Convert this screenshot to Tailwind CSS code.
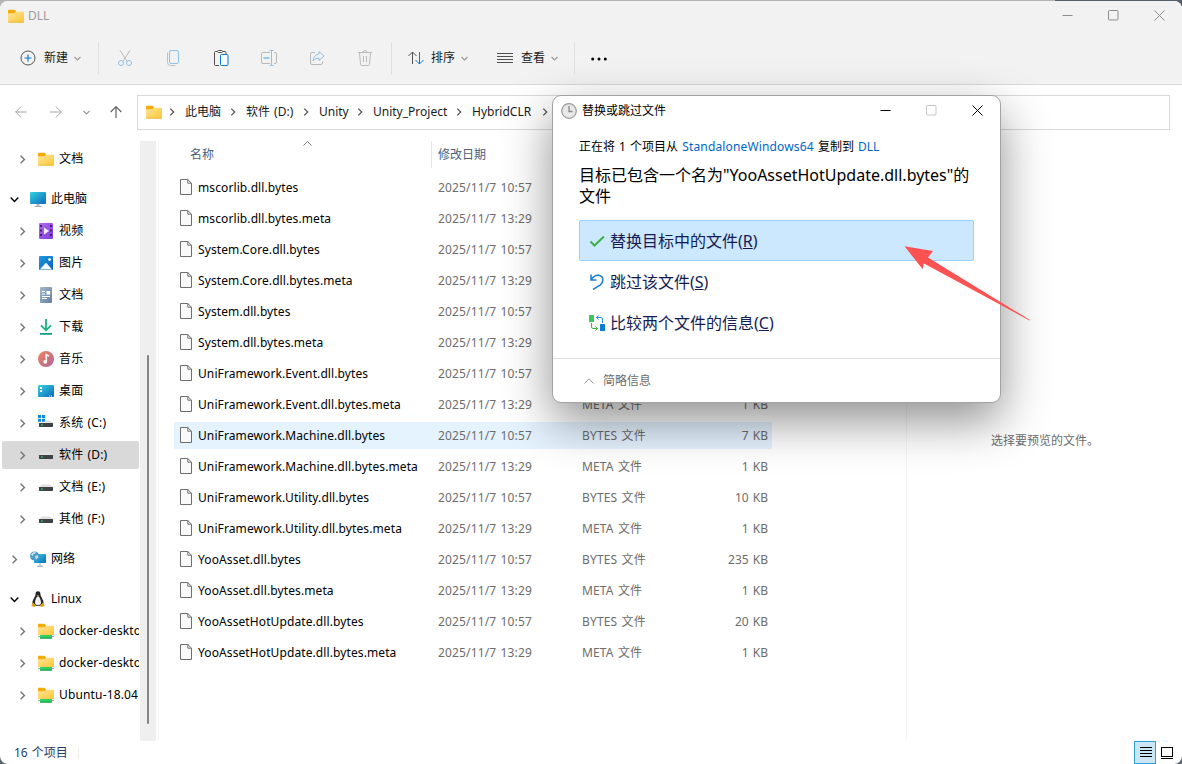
<!DOCTYPE html>
<html lang="zh-CN">
  <head>
    <meta charset="UTF-8" />
    <meta name="viewport" content="width=device-width, initial-scale=1.0" />
    <title>DLL</title>
    <script src="https://cdn.jsdelivr.net/npm/@tailwindcss/browser@4"></script>
  </head>
  <body
    class="relative w-[1182px] h-[764px] overflow-hidden bg-[#5b6670] font-['Noto_Sans','Noto_Sans_CJK_SC',sans-serif] text-[12px] leading-4 text-black [word-spacing:1px]"
  >
    <!-- shared icons -->
    <svg class="absolute size-0">
      <defs>
        <linearGradient id="g-folder" x1="0" y1="0" x2="1" y2="1">
          <stop offset="0" stop-color="#ffe599" />
          <stop offset="1" stop-color="#fcc736" />
        </linearGradient>
        <linearGradient id="g-screen" x1="0" y1="0" x2="1" y2="1">
          <stop offset="0" stop-color="#35d3e0" />
          <stop offset="1" stop-color="#0d68bd" />
        </linearGradient>
        <linearGradient id="g-video" x1="0" y1="0" x2="1" y2="1">
          <stop offset="0" stop-color="#b568f0" />
          <stop offset="1" stop-color="#7c3bd8" />
        </linearGradient>
        <linearGradient id="g-pic" x1="0" y1="0" x2="1" y2="1">
          <stop offset="0" stop-color="#1d9be6" />
          <stop offset="1" stop-color="#0b5fb8" />
        </linearGradient>
        <linearGradient id="g-doc" x1="0" y1="0" x2="1" y2="1">
          <stop offset="0" stop-color="#a3b8cf" />
          <stop offset="1" stop-color="#64809f" />
        </linearGradient>
        <linearGradient id="g-music" x1="0" y1="0" x2="1" y2="1">
          <stop offset="0" stop-color="#f0875a" />
          <stop offset="1" stop-color="#b0609f" />
        </linearGradient>
        <symbol id="folder" viewBox="0 0 16 16">
          <path d="M0 2.7q0-1 1-1h5.2q.6 0 1 .6l.9 1.2V6H0z" fill="#f4ab0d" />
          <path d="M0 5.3h6.3l1.4-1.6h7.5q.8 0 .8.8v9.2q0 .8-.8.8H.8q-.8 0-.8-.8z" fill="url(#g-folder)" />
          <path d="M.3 14.2h15.4" stroke="#e9a91b" stroke-width=".7" />
        </symbol>
        <symbol id="netfolder" viewBox="0 0 16 16">
          <path d="M0 1.8q0-1 1-1h5.2q.6 0 1 .6l.9 1.2V5H0z" fill="#f4ab0d" />
          <path d="M0 4.3h6.3l1.4-1.6h7.5q.8 0 .8.8v8.5H0z" fill="url(#g-folder)" />
          <path d="M0 13.5h16" stroke="#9aa5ad" stroke-width="1" />
          <rect x="2" y="12" width="12" height="3.6" rx=".6" fill="#2fcf62" />
          <path d="M2.2 15.2h11.6" stroke="#178f43" stroke-width=".9" />
        </symbol>
        <symbol id="pc" viewBox="0 0 16 16">
          <rect x="0" y="1" width="16" height="12" rx="1" fill="url(#g-screen)" />
          <path d="M8 13v2" stroke="#b9c0c6" stroke-width="3" />
          <path d="M4.5 15.4h7" stroke="#98a3ad" stroke-width="1" />
        </symbol>
        <symbol id="video" viewBox="0 0 16 16">
          <rect x="1" y="0" width="14" height="16" rx="1.2" fill="url(#g-video)" />
          <path d="M2 3h2M2 7.5h2M2 12h2M12 3h2M12 7.5h2M12 12h2" stroke="#42207e" stroke-width="1.8" />
          <path d="M6 4.4v7l5.2-3.5z" fill="#f3eaff" />
        </symbol>
        <symbol id="picture" viewBox="0 0 16 16">
          <rect x="1" y="1" width="14" height="14" rx="1" fill="url(#g-pic)" />
          <path d="M1.8 14.4l5.4-6q.8-.8 1.6 0l5.4 6z" fill="#f2f8fd" />
          <circle cx="11.6" cy="4.6" r="1.4" fill="#fff" />
        </symbol>
        <symbol id="document" viewBox="0 0 16 16">
          <rect x="2" y="0" width="12" height="16" rx="1" fill="url(#g-doc)" />
          <path d="M4 4.5h3M4 7h3M4 9.5h8M4 11.5h5" stroke="#fff" />
          <rect x="8.5" y="4" width="3.6" height="3.6" fill="#fff" />
        </symbol>
        <symbol id="download" viewBox="0 0 16 16">
          <path d="M8 0v11M3 6.3l5 5 5-5" fill="none" stroke="#19b283" stroke-width="1.8" />
          <path d="M2 14.9h12" stroke="#0f9d8e" stroke-width="1.8" />
        </symbol>
        <symbol id="music" viewBox="0 0 16 16">
          <circle cx="8" cy="8" r="8" fill="url(#g-music)" />
          <path d="M8.3 10.7V3.6l2.6 1.6" fill="none" stroke="#fff" stroke-width="1.5" />
          <circle cx="7.2" cy="10.8" r="1.9" fill="#fff" />
        </symbol>
        <symbol id="desktop" viewBox="0 0 16 16">
          <rect x="0" y="2" width="16" height="12" rx="1" fill="url(#g-screen)" />
          <path d="M2 5h2M2 8h2" stroke="#fff" stroke-width="2" />
          <path d="M11 13h1M13 13h1" stroke="#fff" />
        </symbol>
        <symbol id="drive" viewBox="0 0 16 16">
          <path d="M3.5 5.5h9l2.4 3H1z" fill="#dfe1e3" />
          <rect x="1" y="8" width="14" height="4" rx=".4" fill="#3f4347" />
          <path d="M3 10h2" stroke="#35e04a" stroke-width="1.2" />
        </symbol>
        <symbol id="windrive" viewBox="0 0 16 16">
          <path d="M0 0h3.2v3H0zM4 0h3.2v3H4zM0 3.8h3.2v3H0zM4 3.8h3.2v3H4z" fill="#1389dc" />
          <path d="M8 5.5h4.5l2.4 3H1L2 7.4h6z" fill="#dfe1e3" />
          <rect x="1" y="8" width="14" height="4" rx=".4" fill="#3f4347" />
          <path d="M3 10h2" stroke="#35e04a" stroke-width="1.2" />
        </symbol>
        <symbol id="network" viewBox="0 0 16 16">
          <rect x="4" y="3" width="12" height="9" rx=".8" fill="url(#g-screen)" />
          <path d="M10 12v3M7 15.3h6" stroke="#9ba7b1" />
          <circle cx="4.6" cy="5" r="4.6" fill="#4b9cc9" />
          <path d="M1 3.4q2-3 5-2.6l-1 2-2 .6-.4 2zM5 5l2.6-.8.8 2L6 8.4z" fill="#c9e5f2" />
        </symbol>
        <symbol id="tux" viewBox="0 0 16 16">
          <path d="M8 .2c2 0 2.5 1.6 2.5 3.2 0 2.3 3.1 5 3.1 8.6 0 2-2 3-5.6 3s-5.6-1-5.6-3c0-3.6 3.1-6.3 3.1-8.6C5.5 1.8 6 .2 8 .2z" fill="#23252a" />
          <path d="M8 5.3c1.200 0 3 3.7 3 6.2 0 1.9-1.3 2.7-3 2.7s-3-.8-3-2.7c0-2.5 1.8-6.2 3-6.2z" fill="#f2f2f2" />
          <path d="M6.6 4.2h2.8L8 5.6z" fill="#e9a51d" />
          <path d="M2.6 11.3l3.6 3.3q-.4 1.3-1.8 1.3l-3-.8zM13.4 11.3l-3.6 3.3q.4 1.3 1.8 1.3l3-.8z" fill="#d9a021" />
        </symbol>
        <symbol id="file" viewBox="0 0 12 16">
          <path d="M.5.5h7.3l3.7 3.7v11.3H.5z" fill="#fafafa" stroke="#6e6e6e" />
          <path d="M7.8.5v3.700h3.700" fill="none" stroke="#6e6e6e" />
        </symbol>
        <symbol id="right" viewBox="0 0 8 8">
          <path d="M2.3.6L5.7 4 2.3 7.4" fill="none" stroke="currentColor" stroke-width="1.3" />
        </symbol>
        <symbol id="down" viewBox="0 0 8 8">
          <path d="M.6 2.3L4 5.7l3.4-3.4" fill="none" stroke="currentColor" stroke-width="1.3" />
        </symbol>
      </defs>
    </svg>

    <!-- strip of the window behind -->
    <div class="absolute inset-x-0 top-0 h-3 flex">
      <div class="w-[1055px] bg-[#b4b4b4]"></div>
      <div class="flex-1 bg-[#55606b]"></div>
    </div>

    <div class="relative mt-px h-[763px] flex flex-col rounded-lg bg-white overflow-hidden">
      <!-- title bar and toolbar -->
      <header class="h-[84px] shrink-0 bg-[#f2f2f2] border-b border-[#dadada]">
        <div class="h-[29px] flex items-center pl-2 text-[#9a9a9a]">
          <svg class="size-4"><use href="#folder" /></svg>
          <span class="ml-1">DLL</span>
          <div class="ml-auto mr-[17px] flex items-center gap-[35px] text-[#8d8d8d]">
            <svg class="w-[11px] h-[11px]" viewBox="0 0 11 11"><path d="M.5 5.5h10" stroke="currentColor" /></svg>
            <svg class="w-[11px] h-[11px]" viewBox="0 0 11 11"><rect x=".5" y=".5" width="9.5" height="9.5" rx="1" fill="none" stroke="currentColor" /></svg>
            <svg class="w-[11px] h-[11px]" viewBox="0 0 11 11"><path d="M.5.5l10 10M10.5.5l-10 10" stroke="currentColor" /></svg>
          </div>
        </div>
        <div class="h-[54px] flex items-center pl-5 pt-0.5 text-[#1a1a1a]">
          <svg class="size-4 shrink-0" viewBox="0 0 16 16" fill="none">
            <circle cx="8" cy="8" r="7" stroke="#555" />
            <path d="M8 4.5v7M4.5 8h7" stroke="#0f7ad1" stroke-width="1.2" />
          </svg>
          <span class="ml-2">新建</span>
          <svg class="ml-1.5 size-[7px] text-[#999]"><use href="#down" /></svg>
          <div class="ml-[17px] w-px h-8 bg-[#e0e0e0]"></div>
          <div class="ml-[18px] flex items-center gap-8">
            <!-- cut -->
            <svg class="size-4" viewBox="0 0 16 16" fill="none">
              <path d="M3 .3l7 11M13 .3l-7 11" stroke="#b9b9b9" />
              <circle cx="4" cy="13" r="2.5" stroke="#8fc1ea" /><circle cx="12" cy="13" r="2.5" stroke="#8fc1ea" />
            </svg>
            <!-- copy -->
            <svg class="size-4" viewBox="0 0 16 16" fill="none">
              <path d="M2.5 2.5v10q0 3 3 3h5" stroke="#c0c0c0" />
              <rect x="4.5" y=".5" width="9" height="13" rx="1.5" stroke="#8fc1ea" />
            </svg>
            <!-- paste -->
            <svg class="size-4" viewBox="0 0 16 16" fill="none">
              <path d="M6 15.5H2.500q-1 0-1-1v-12q0-1 1-1H4m6 0h2q1 0 1 1V4" stroke="#505050" />
              <rect x="4.5" y=".5" width="5" height="2" rx="1" stroke="#505050" />
              <rect x="7.5" y="4.5" width="7.5" height="11" rx="1" fill="#f6fafd" stroke="#0f7ad1" />
            </svg>
            <!-- rename -->
            <svg class="size-4" viewBox="0 0 16 16" fill="none">
              <path d="M9 2.5H2q-1.5 0-1.5 1.5v8q0 1.5 1.5 1.5h7M13 2.5h1q1.5 0 1.5 1.5v8q0 1.5-1.5 1.5h-1" stroke="#b9b9b9" />
              <path d="M10.5.5v15M8.5.5h4M8.5 15.5h4" stroke="#8fc1ea" />
              <path d="M2.5 8h6" stroke="#7fb9e8" stroke-width="1.7" />
            </svg>
            <!-- share -->
            <svg class="size-4" viewBox="0 0 16 16" fill="none">
              <path d="M6 2.5H3Q1.500 2.5 1.5 4v9q0 1.5 1.5 1.5h9q1.5 0 1.5-1.5v-1.500" stroke="#b9b9b9" />
              <path d="M10 1.5l5 4.5-5 4.5V8q-4 0-6 3 .5-6 6-7z" stroke="#8fc1ea" stroke-linejoin="round" />
            </svg>
            <!-- delete -->
            <svg class="size-4" viewBox="0 0 16 16" fill="none" stroke="#b9b9b9">
              <path d="M1 2.5h14M6 2.5q0-2 2-2t2 2M2.5 2.5l1 12q.1 1 1 1h7q.9 0 1-1l1-12M6.5 6v6M9.5 6v6" />
            </svg>
          </div>
          <div class="ml-[18px] w-px h-8 bg-[#e0e0e0]"></div>
          <!-- sort -->
          <svg class="ml-4 size-4" viewBox="0 0 16 16" fill="none">
            <path d="M4.5 14V2M.5 6l4-4 4 4" stroke="#505050" />
            <path d="M11.5 2v12M7.5 10l4 4 4-4" stroke="#0f7ad1" />
          </svg>
          <span class="ml-[7px]">排序</span>
          <svg class="ml-1.5 size-[7px] text-[#999]"><use href="#down" /></svg>
          <!-- view -->
          <svg class="ml-[29px] w-4 h-3" viewBox="0 0 16 12" stroke="#505050"><path d="M0 1.5h16M0 4.5h16M0 7.5h16M0 10.5h16" /></svg>
          <span class="ml-2">查看</span>
          <svg class="ml-1.5 size-[7px] text-[#999]"><use href="#down" /></svg>
          <div class="ml-4 w-px h-8 bg-[#e0e0e0]"></div>
          <svg class="ml-4 mt-px w-4 h-1" viewBox="0 0 16 4"><circle cx="1.7" cy="2" r="1.5" /><circle cx="8" cy="2" r="1.5" /><circle cx="14.3" cy="2" r="1.5" /></svg>
        </div>
      </header>

      <!-- address bar -->
      <div class="h-[56px] shrink-0 flex items-start pt-2.5">
        <div class="w-[137px] h-[35px] flex items-center pb-px">
          <svg class="ml-[15px] w-3 h-3" viewBox="0 0 12 12" fill="none" stroke="#a5a5a5"><path d="M12 6H.7M6 .7L.7 6 6 11.3" /></svg>
          <svg class="ml-[23px] w-3 h-3" viewBox="0 0 12 12" fill="none" stroke="#a5a5a5"><path d="M0 6h11.3M6 .7L11.3 6 6 11.3" /></svg>
          <svg class="ml-[21px] size-[7px] text-[#999]"><use href="#down" /></svg>
          <svg class="ml-5 w-3 h-3" viewBox="0 0 12 12" fill="none" stroke="#606060" stroke-width="1.2"><path d="M6 12V.7M.7 6L6 .7 11.3 6" /></svg>
        </div>
        <div id="crumbs" class="w-[1033px] h-[35px] flex items-center border border-[#d9d9d9] pl-2 pb-px text-[#1a1a1a]">
          <svg class="size-4"><use href="#folder" /></svg>
        </div>
      </div>

      <main class="flex-1 min-h-0 flex">
        <!-- navigation -->
        <nav id="nav" class="w-[140px] pt-0.5 overflow-hidden"></nav>
        <div class="w-4 bg-[#efefef] pt-[214px]">
          <div class="ml-[7px] w-0.5 h-[369px] rounded-full bg-[#858585]"></div>
        </div>

        <!-- file list -->
        <section class="ml-0.5 w-[749px] border-x border-[#f5f5f5] pl-[15px]">
          <div class="relative h-[27px] flex items-center text-[#4c607a]">
            <span class="ml-4 w-[241px]">名称</span>
            <div class="w-px h-[27px] bg-[#e5e5e5]"></div>
            <span class="ml-1.5">修改日期</span>
            <svg class="absolute left-[129px] top-0 w-[9px] h-[5px]" viewBox="0 0 9 5" fill="none" stroke="#777"><path d="M.5 4.5l4-4 4 4" /></svg>
          </div>
          <div id="files" class="pt-1.5 flex flex-col gap-1"></div>
        </section>

        <div class="flex-1 flex justify-center pl-px pt-[292px] text-[#6d6d6d]">
          <span>选择要预览的文件。</span>
        </div>
      </main>

      <footer class="h-[23px] shrink-0 flex items-center pl-3.5 text-[#1f3d66]">
        <span class="w-[64px]">16 个项目</span>
        <div class="w-px h-3 bg-[#f0f0f0]"></div>
        <div class="ml-auto w-[22px] h-[23px] flex items-center justify-center border border-[#2f9fdb] bg-[#cbe7f5] pl-0.5">
          <svg class="w-3 h-[11px]" viewBox="0 0 12 11" stroke="#000"><path d="M0 .5h12M0 3.5h12M0 6.5h12M0 9.5h12" /></svg>
        </div>
        <div class="w-[26px] flex pl-[5px]">
          <svg class="w-3 h-3" viewBox="0 0 12 12" fill="#fff" stroke="#000"><rect x=".5" y=".5" width="11" height="9" /><path d="M0 11.5h12" /></svg>
        </div>
      </footer>
    </div>

    <!-- replace or skip dialog -->
    <div
      class="absolute left-[552px] top-[95px] w-[449px] h-[308px] flex flex-col rounded-[9px] border border-[#a3a3a3] bg-white shadow-[0_18px_48px_rgba(0,0,0,0.44)]"
    >
      <div class="h-[29px] flex items-center pl-2">
        <svg class="size-4" viewBox="0 0 16 16" fill="none">
          <circle cx="8" cy="8" r="7.3" fill="#e8e8e8" stroke="#9a9a9a" stroke-width="1.2" />
          <path d="M8 3v5.500h3.500" stroke="#8a8a8a" stroke-width="1.3" />
        </svg>
        <span class="ml-[5px]">替换或跳过文件</span>
        <div class="ml-auto mr-[17px] flex items-center gap-[35px]">
          <svg class="w-[11px] h-[11px]" viewBox="0 0 11 11"><path d="M.5 5.5h10" stroke="#000" /></svg>
          <svg class="w-[11px] h-[11px]" viewBox="0 0 11 11"><rect x=".5" y=".5" width="9.5" height="9.5" rx="1" fill="none" stroke="#c4c4c4" /></svg>
          <svg class="w-[11px] h-[11px]" viewBox="0 0 11 11"><path d="M.5.5l10 10M10.5.5l-10 10" stroke="#000" /></svg>
        </div>
      </div>
      <div class="flex-1 pl-[26px] pr-[26px] pt-[14px]">
        <p class="whitespace-nowrap">
          正在将 1 个项目从 <a class="text-[#0066cc] tracking-[0.15px]">StandaloneWindows64</a> 复制到 <a class="text-[#0066cc]">DLL</a>
        </p>
        <p class="mt-2.5 text-[16px] leading-[21px] whitespace-nowrap">
          目标已包含一个名为"YooAssetHotUpdate.dll.bytes"的<br />文件
        </p>
        <div class="mt-[13px] flex flex-col text-[16px] leading-5 text-[#151c55]">
          <div class="w-[395px] h-[41px] flex items-center rounded-xs border border-[#99d1ff] bg-[#cce8ff] pl-[9px]">
            <svg class="size-4" viewBox="0 0 16 16" fill="none"><path d="M1.500 8.500l4 4L15 3.500" stroke="#3fae49" stroke-width="2" /></svg>
            <span class="ml-[5px]">替换目标中的文件(<u>R</u>)</span>
          </div>
          <div class="h-[41px] flex items-center pl-2.5">
            <svg class="size-4" viewBox="0 0 16 16" fill="none" stroke="#1b7fd0" stroke-width="1.5"><path d="M2 .5V6h5.500M2.300 5.500q3-4.700 7.400-4.200 4.300.8 4.200 4.700-.1 2.500-2.500 5L4 15.500" /></svg>
            <span class="ml-[5px]">跳过该文件(<u>S</u>)</span>
          </div>
          <div class="h-[41px] flex items-center pl-2.5">
            <svg class="size-4" viewBox="0 0 16 16" fill="none">
              <rect width="5" height="7" rx=".5" fill="#3ac85a" /><rect x="11" y="9" width="5" height="7" rx=".5" fill="#0c7cd5" />
              <path d="M2.500 8v4q0 1.500 1.500 1.500h4.500M6.500 11.500l2 2-2 2" stroke="#3fae49" />
              <path d="M13.500 8V4q0-1.500-1.500-1.500H7.500M9.500.5l-2 2 2 2" stroke="#2d90dc" />
            </svg>
            <span class="ml-[5px]">比较两个文件的信息(<u>C</u>)</span>
          </div>
        </div>
      </div>
      <div class="h-[44px] flex items-center border-t border-[#dfdfdf] pl-[31px] text-[#6d6d6d]">
        <svg class="w-[10px] h-[6px]" viewBox="0 0 10 6" fill="none" stroke="#999"><path d="M.5 5.500L5 .8l4.500 4.700" /></svg>
        <span class="ml-[9px]">简略信息</span>
      </div>
    </div>

    <!-- pointer arrow -->
    <svg class="absolute left-[900px] top-[240px] w-[135px] h-[85px]" viewBox="0 0 135 85">
      <path d="M4.500 6.300L33 11l-5 6.500L130 80 129.500 80.500 24 23.500 22.500 29z" fill="#fc5252" />
    </svg>
  </body>
  <script>
    const crumbs = [
      { text: '此电脑', width: 'w-[36px]' },
      { text: '软件 (D:)', width: 'w-[48px]' },
      { text: 'Unity', width: 'w-[29px]' },
      { text: 'Unity_Project', width: 'w-[74px]' },
      { text: 'HybridCLR', width: 'w-[61px]' },
    ];

    const nav = [
      { icon: 'folder', text: '文档' },
      { icon: 'pc', text: '此电脑', top: true, open: true },
      { icon: 'video', text: '视频' },
      { icon: 'picture', text: '图片' },
      { icon: 'document', text: '文档' },
      { icon: 'download', text: '下载' },
      { icon: 'music', text: '音乐' },
      { icon: 'desktop', text: '桌面' },
      { icon: 'windrive', text: '系统 (C:)' },
      { icon: 'drive', text: '软件 (D:)', selected: true },
      { icon: 'drive', text: '文档 (E:)' },
      { icon: 'drive', text: '其他 (F:)' },
      { icon: 'network', text: '网络', top: true },
      { icon: 'tux', text: 'Linux', top: true, open: true },
      { icon: 'netfolder', text: 'docker-desktop' },
      { icon: 'netfolder', text: 'docker-desktop-data' },
      { icon: 'netfolder', text: 'Ubuntu-18.04' },
    ];

    // every .bytes file is followed by its .meta
    const files = [
      ['mscorlib.dll.bytes', '5 KB'],
      ['System.Core.dll.bytes', '5 KB'],
      ['System.dll.bytes', '5 KB'],
      ['UniFramework.Event.dll.bytes', '5 KB'],
      ['UniFramework.Machine.dll.bytes', '7 KB'],
      ['UniFramework.Utility.dll.bytes', '10 KB'],
      ['YooAsset.dll.bytes', '235 KB'],
      ['YooAssetHotUpdate.dll.bytes', '20 KB'],
    ];

    document.getElementById('crumbs').innerHTML += crumbs
      .map(
        c => `
        <svg class="ml-1.5 mr-[9px] size-2 shrink-0 text-[#555]"><use href="#right" /></svg>
        <span class="${c.width} mr-0.5 whitespace-nowrap">${c.text}</span>`
      )
      .join('') + '<svg class="ml-1.5 size-2 text-[#555]"><use href="#right" /></svg>';

    document.getElementById('nav').innerHTML = nav
      .map(
        n => `
        <div class="h-8 pl-0.5 pr-px flex items-center ${n.top ? 'mt-2' : ''}">
          <div class="w-[137px] h-7 flex items-center rounded-xs overflow-hidden ${n.selected ? 'bg-[#d9d9d9]' : ''} ${n.top ? 'pl-2' : 'pl-4'}">
            <svg class="size-[9px] shrink-0 ${n.open ? 'text-black' : 'text-[#777]'}"><use href="#${n.open ? 'down' : 'right'}" /></svg>
            <svg class="ml-[11px] size-4 shrink-0"><use href="#${n.icon}" /></svg>
            <span class="ml-[5px] whitespace-nowrap ${n.top ? '' : 'tracking-[0.15px]'}">${n.text}</span>
          </div>
        </div>`
      )
      .join('');

    const row = (name, time, type, size) => `
        <div class="w-[598px] h-[27px] flex items-center rounded-xs text-[#6d6d6d] ${name === 'UniFramework.Machine.dll.bytes' ? 'bg-[#e5f3ff]' : ''}">
          <svg class="ml-1.5 mb-px w-3 h-4"><use href="#file" /></svg>
          <span class="ml-1.5 w-[240px] text-black tracking-[0.1px]">${name}</span>
          <span class="w-[144px] tracking-[0.15px]">2025/11/7 ${time}</span>
          <span class="w-[100px] tracking-[0.15px]">${type} 文件</span>
          <span class="w-[86px] text-right">${size}</span>
        </div>`;

    document.getElementById('files').innerHTML = files
      .map(([name, size]) => row(name, '10:57', 'BYTES', size) + row(name + '.meta', '13:29', 'META', '1 KB'))
      .join('');
  </script>
</html>
